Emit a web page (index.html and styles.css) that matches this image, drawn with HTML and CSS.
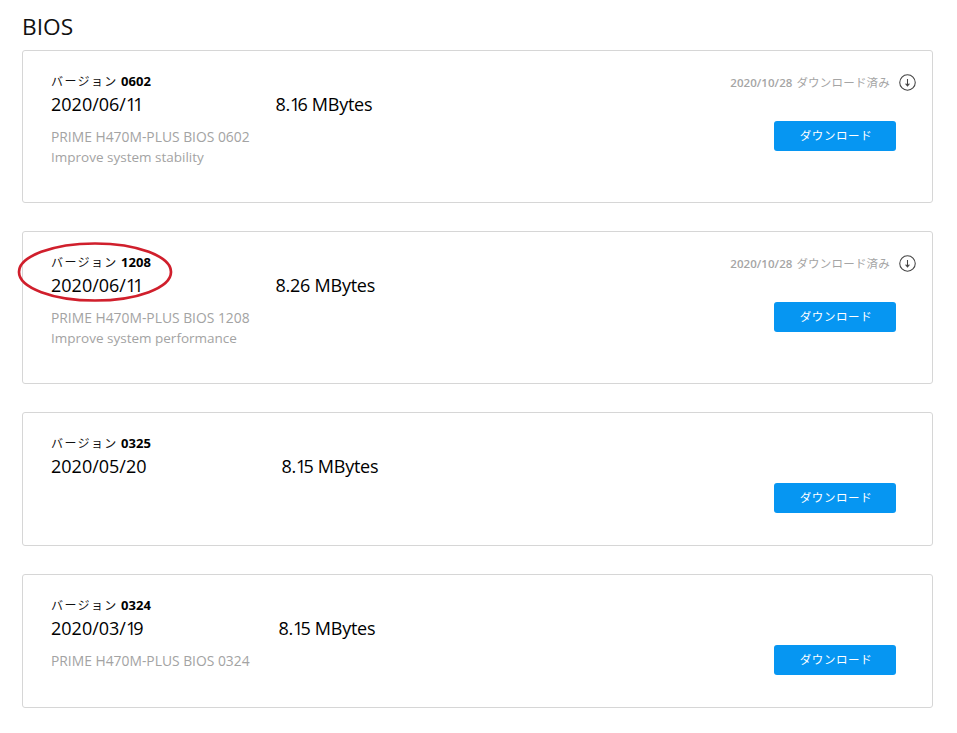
FILE: index.html
```html
<!DOCTYPE html>
<html lang="ja">
<head>
<meta charset="utf-8">
<title>BIOS</title>
<link rel="stylesheet" href="styles.css">
</head>
<body>
<h1 class="title">BIOS</h1>

<section class="card card-tall">
  <div class="info">
    <div class="version">バージョン <b>0602</b></div>
    <div class="meta"><span class="date">2020/06/<span class="tight">1</span><span class="tight">1</span></span><span class="size">8.<span class="tight">1</span>6 MBytes</span></div>
    <p class="desc">PRIME H470M-PLUS BIOS 0602</p>
    <p class="desc note">Improve system stability</p>
  </div>
  <div class="side">
    <div class="status"><span class="stamp">2020/10/28</span> <span>ダウンロード済み</span>
      <svg class="icon" viewBox="0 0 16 16"><circle cx="8" cy="8" r="7.3"/><path d="M8 4.6v6.2M6.2 9 8 11.2 9.8 9"/></svg>
    </div>
    <a class="btn">ダウンロード</a>
  </div>
</section>

<section class="card card-tall">
  <div class="info">
    <div class="version ringed">バージョン <b>1208</b>
      <svg class="ring" viewBox="0 0 156 62"><ellipse cx="78" cy="31" rx="76" ry="28.5"/></svg>
    </div>
    <div class="meta"><span class="date">2020/06/<span class="tight">1</span><span class="tight">1</span></span><span class="size">8.26 MBytes</span></div>
    <p class="desc">PRIME H470M-PLUS BIOS 1208</p>
    <p class="desc note">Improve system performance</p>
  </div>
  <div class="side">
    <div class="status"><span class="stamp">2020/10/28</span> <span>ダウンロード済み</span>
      <svg class="icon" viewBox="0 0 16 16"><circle cx="8" cy="8" r="7.3"/><path d="M8 4.6v6.2M6.2 9 8 11.2 9.8 9"/></svg>
    </div>
    <a class="btn">ダウンロード</a>
  </div>
</section>

<section class="card card-short">
  <div class="info">
    <div class="version">バージョン <b>0325</b></div>
    <div class="meta"><span class="date">2020/05/20</span><span class="size">8.<span class="tight">1</span>5 MBytes</span></div>
  </div>
  <div class="side">
    <div class="status status-empty"></div>
    <a class="btn">ダウンロード</a>
  </div>
</section>

<section class="card card-short">
  <div class="info">
    <div class="version">バージョン <b>0324</b></div>
    <div class="meta"><span class="date">2020/03/<span class="tight">1</span>9</span><span class="size">8.<span class="tight">1</span>5 MBytes</span></div>
    <p class="desc">PRIME H470M-PLUS BIOS 0324</p>
  </div>
  <div class="side">
    <div class="status status-empty"></div>
    <a class="btn">ダウンロード</a>
  </div>
</section>
</body>
</html>
```
FILE: styles.css
```css
* { box-sizing: border-box; }
html, body { background: #fff; }
body {
  margin: 0;
  padding: 0 24px 0 22px;
  height: 733px;
  overflow: hidden;
  font-family: "Open Sans", "Noto Sans CJK JP", sans-serif;
  color: #000;
}
.title {
  margin: 0;
  height: 50px;
  padding-top: 11px;
  font-size: 22.7px;
  line-height: 31px;
  font-weight: 400;
  color: #111;
}
.card {
  display: flex;
  justify-content: space-between;
  border: 1px solid #d6d6d6;
  border-radius: 3px;
  padding: 21px 16px 0 28px;
  margin-bottom: 28px;
}
.card-tall { height: 153px; }
.card-short { height: 134px; }
.version {
  font-size: 12px;
  line-height: 19px;
  height: 20px;
  color: #111;
  letter-spacing: 1.4px;
  word-spacing: -1.2px;
}
.version b { font-size: 13px; font-weight: 700; letter-spacing: 0; color: #000; }
.ringed { position: relative; }
.ring {
  position: absolute;
  left: -34px;
  top: -12px;
  width: 156px;
  height: 62px;
  fill: none;
  stroke: #d01f2c;
  stroke-width: 2.7;
}
.meta {
  display: flex;
  gap: 135px;
  font-size: 18px;
  line-height: 24px;
  color: #000;
}
.size { letter-spacing: -0.25px; }
.tight { letter-spacing: -3px; }
.desc {
  margin: 0;
  font-size: 13.85px;
  line-height: 20px;
  color: #a3a3a3;
}
.note { font-size: 13.5px; }
.meta + .desc { margin-top: 11px; }
.side {
  display: flex;
  flex-direction: column;
  align-items: flex-end;
}
.status {
  display: flex;
  align-items: center;
  gap: 4px;
  height: 20px;
  font-size: 11.5px;
  color: #a5a5a5;
  letter-spacing: 0.2px;
}
.stamp { font-weight: 600; letter-spacing: 0.05px; }
.status-empty { visibility: hidden; }
.icon {
  width: 17px;
  height: 17px;
  margin-left: 5px;
  fill: none;
  stroke: #444;
  stroke-width: 1;
}
.btn {
  display: flex;
  align-items: center;
  justify-content: center;
  width: 122px;
  height: 30px;
  margin-top: 29px;
  margin-right: 20px;
  padding: 0 0 3px 2px;
  border-radius: 3px;
  background: #0696f2;
  color: #fff;
  font-size: 11.5px;
  letter-spacing: 0.6px;
}
```
